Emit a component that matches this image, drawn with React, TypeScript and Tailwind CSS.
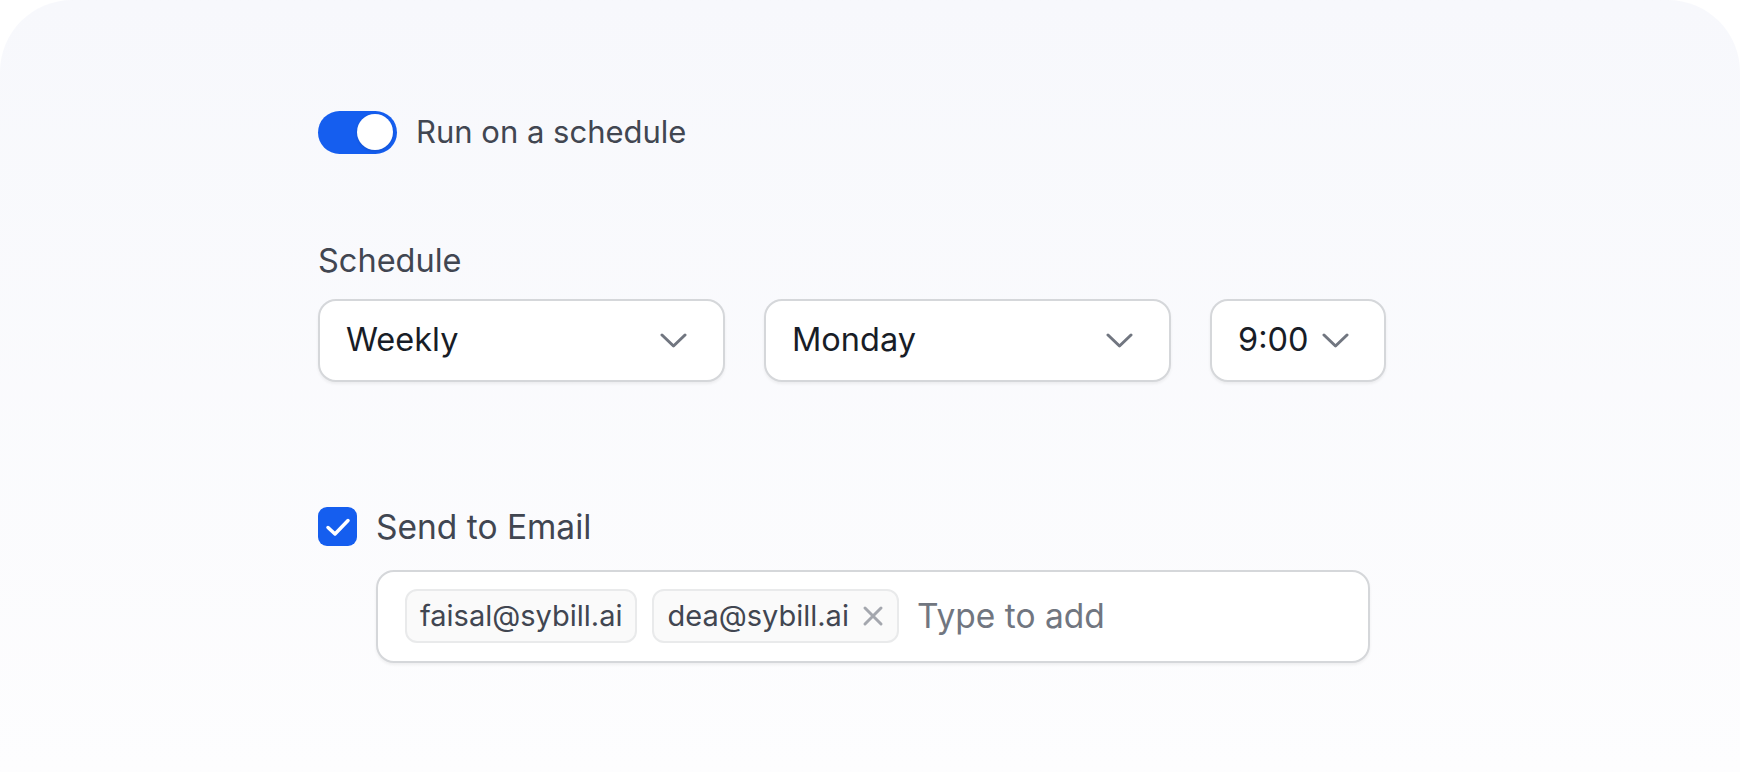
import React from 'react';

function Chevron() {
  return (
    <svg width="27" height="15" viewBox="0 0 27 15" fill="none" className="shrink-0">
      <path d="M2 2l11.5 11 11.5-11" stroke="#717680" strokeWidth="3" strokeLinecap="round" strokeLinejoin="round" />
    </svg>
  );
}

function Select({ value, width }: { value: string; width: string }) {
  return (
    <div
      className={`${width} h-[83px] flex items-center justify-between pl-[26px] pr-[36px] bg-white border-2 border-[#d5d7da] rounded-[18px] shadow-[0_2px_3px_rgba(10,13,18,0.06)]`}
    >
      <span className="text-[32.5px] text-[#181d27]">{value}</span>
      <Chevron />
    </div>
  );
}

function Chip({ email, removable }: { email: string; removable?: boolean }) {
  return (
    <div className="h-[54px] flex items-center gap-[13px] px-[13px] bg-[#fafafa] border-2 border-[#e9eaeb] rounded-[12px]">
      <span className="text-[29px] text-[#414651]">{email}</span>
      {removable && (
        <svg width="22" height="22" viewBox="0 0 22 22" fill="none">
          <path d="M3 3l16 16M19 3L3 19" stroke="#a4a7ae" strokeWidth="3" strokeLinecap="round" />
        </svg>
      )}
    </div>
  );
}

export default function App() {
  const [enabled, setEnabled] = React.useState(true);
  const [sendEmail, setSendEmail] = React.useState(true);

  return (
    <div className="min-h-screen bg-white" style={{ fontFamily: 'Inter, "Noto Sans", sans-serif' }}>
      <div className="h-[772px] rounded-t-[72px] bg-gradient-to-b from-[#f7f8fc] to-[#fdfdfe] pl-[318px] pt-[109px]">
        {/* Schedule toggle */}
        <div className="flex items-center gap-[19px]">
          <button
            onClick={() => setEnabled(!enabled)}
            className={`w-[79px] h-[43px] rounded-full flex items-center px-[4px] ${enabled ? 'bg-[#155eef] justify-end' : 'bg-[#e9eaeb] justify-start'}`}
          >
            <span className="w-[36px] h-[36px] rounded-full bg-white shadow-[0_1px_3px_rgba(10,13,18,0.15)]" />
          </button>
          <span className="text-[31px] text-[#414651]">Run on a schedule</span>
        </div>

        {/* Schedule selects */}
        <div className="mt-[87px] text-[32.5px] leading-[36px] text-[#414651]">Schedule</div>
        <div className="mt-[20px] flex gap-[39px]">
          <Select value="Weekly" width="w-[407px]" />
          <Select value="Monday" width="w-[407px]" />
          <div className="w-[176px] h-[83px] flex items-center gap-[13px] pl-[26px] bg-white border-2 border-[#d5d7da] rounded-[18px] shadow-[0_2px_3px_rgba(10,13,18,0.06)]">
            <span className="text-[32.5px] text-[#181d27]">9:00</span>
            <Chevron />
          </div>
        </div>

        {/* Email */}
        <div className="mt-[125px] flex items-center gap-[19px]">
          <button
            onClick={() => setSendEmail(!sendEmail)}
            className={`w-[39px] h-[39px] rounded-[9px] flex items-center justify-center ${sendEmail ? 'bg-[#155eef]' : 'bg-white border-2 border-[#d5d7da]'}`}
          >
            {sendEmail && (
              <svg width="26" height="20" viewBox="0 0 26 20" fill="none">
                <path d="M3 10.5l7 6.5L23 3.5" stroke="white" strokeWidth="3.5" strokeLinecap="round" strokeLinejoin="round" />
              </svg>
            )}
          </button>
          <span className="text-[33.5px] leading-[40px] text-[#414651]">Send to Email</span>
        </div>
        <div className="mt-[23px] ml-[58px] w-[994px] h-[93px] flex items-center gap-[15px] px-[27px] bg-white border-2 border-[#d5d7da] rounded-[18px] shadow-[0_2px_3px_rgba(10,13,18,0.06)]">
          <Chip email="faisal@sybill.ai" />
          <Chip email="dea@sybill.ai" removable />
          <span className="ml-[3px] text-[33.5px] text-[#717680]">Type to add</span>
        </div>
      </div>
    </div>
  );
}
